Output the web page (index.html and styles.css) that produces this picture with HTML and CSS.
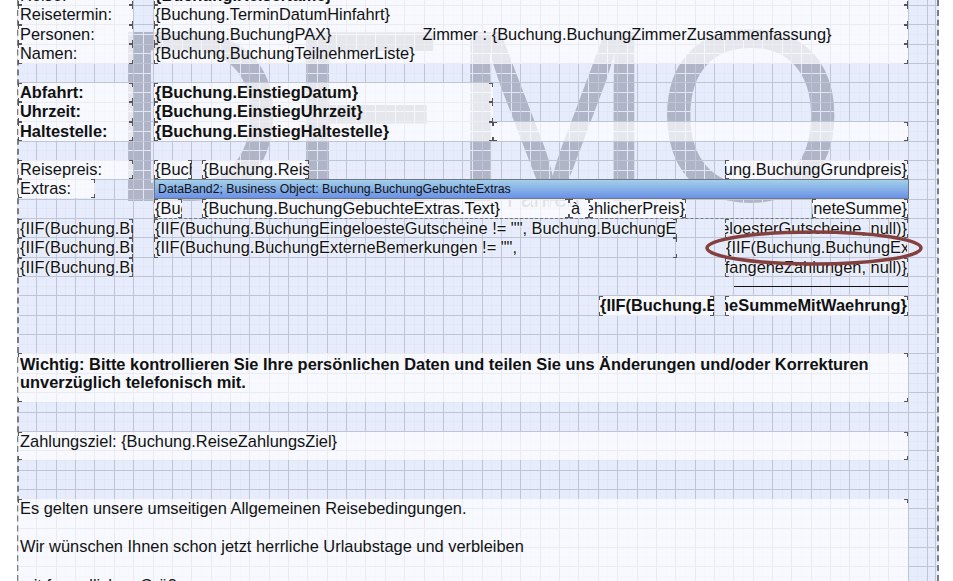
FILE: index.html
```html
<!DOCTYPE html>
<html lang="de">
<head>
  <meta charset="UTF-8">
  <title>Report Designer</title>
  <link rel="stylesheet" href="styles.css">
</head>
<body>
  <div id="desk">
    <div id="page"></div>
    <div id="demo">DEMO</div>
    <div id="demo-small">Fahren</div>
    <div id="grid"></div>

    <div class="obj fill left" id="labels-top">
      <div class="line ticks">Reise:</div>
      <div class="line ticks">Reisetermin:</div>
      <div class="line ticks">Personen:</div>
      <div class="line ticks">Namen:</div>
    </div>
    <div class="obj fill" id="values-top">
      <div class="line ticks bold">{Buchung.ReiseName}</div>
      <div class="line ticks">{Buchung.TerminDatumHinfahrt}</div>
      <div class="line ticks">{Buchung.BuchungPAX}<span id="zimmer">Zimmer : {Buchung.BuchungZimmerZusammenfassung}</span></div>
      <div class="line ticks">{Buchung.BuchungTeilnehmerListe}</div>
    </div>

    <div class="obj fill bold left" id="labels-abfahrt">
      <div class="line ticks">Abfahrt:</div>
      <div class="line ticks">Uhrzeit:</div>
      <div class="line ticks">Haltestelle:</div>
    </div>
    <div class="obj fill bold" id="values-abfahrt">
      <div class="line ticks">{Buchung.EinstiegDatum}</div>
      <div class="line ticks">{Buchung.EinstiegUhrzeit}</div>
      <div class="line ticks">{Buchung.EinstiegHaltestelle}</div>
    </div>
    <div class="obj ticks fill" id="halte-rest"></div>

    <div class="obj ticks fill left" id="reisepreis">Reisepreis:</div>
    <div class="obj ticks fill left" id="extras">Extras:</div>
    <div class="obj ticks fill" id="preis-a">{Buchung.ReisePreis}</div>
    <div class="obj ticks fill" id="preis-b">{Buchung.ReiseGrundpreis}</div>
    <div class="obj ticks fill end" id="preis-c"><span>{Buchung.BuchungGrundpreis}</span></div>

    <div id="extras-row"></div>
    <div class="obj ticks fill" id="extra-a">{Buchung.Anzahl}</div>
    <div class="obj ticks fill" id="extra-b">{Buchung.BuchungGebuchteExtras.Text}</div>
    <div class="obj ticks fill" id="extra-c">à</div>
    <div class="obj ticks fill end" id="extra-d"><span>{Buchung.ZaehlicherPreis}</span></div>
    <div class="obj ticks fill end" id="extra-e"><span>{Buchung.BerechneteSumme}</span></div>

    <div id="band">DataBand2; Business Object: Buchung.BuchungGebuchteExtras</div>

    <div class="obj halo left" id="iif-left">
      <div class="line ticks">{IIF(Buchung.BuchungEingeloeste</div>
      <div class="line ticks">{IIF(Buchung.BuchungExterne</div>
      <div class="line ticks">{IIF(Buchung.BuchungEmpfangene</div>
    </div>
    <div class="obj halo" id="iif-mid">
      <div class="line ticks">{IIF(Buchung.BuchungEingeloesteGutscheine != "", Buchung.BuchungEingeloeste</div>
      <div class="line ticks">{IIF(Buchung.BuchungExterneBemerkungen != "",</div>
    </div>
    <div class="obj ticks halo end" id="iif-right-a"><span>{IIF(Buchung.EingeloesterGutscheine, null)}</span></div>
    <div class="obj halo" id="iif-right-b">{IIF(Buchung.BuchungExterneBemerkungen</div>
    <div class="obj ticks halo end" id="iif-right-c"><span>{IIF(Buchung.EmpfangeneZahlungen, null)}</span></div>

    <div id="sum-line"></div>
    <div class="obj ticks fill bold" id="sum-a">{IIF(Buchung.BuchungEmpfangen</div>
    <div class="obj ticks fill bold end" id="sum-b"><span>{Buchung.OffeneSummeMitWaehrung}</span></div>

    <div class="obj ticks fill bold left" id="wichtig">Wichtig: Bitte kontrollieren Sie Ihre persönlichen Daten und teilen Sie uns Änderungen und/oder Korrekturen<br>unverzüglich telefonisch mit.</div>
    <div class="obj ticks fill left" id="zahlung">Zahlungsziel: {Buchung.ReiseZahlungsZiel}</div>
    <div class="obj ticks fill left" id="schluss">Es gelten unsere umseitigen Allgemeinen Reisebedingungen.<br><br>Wir wünschen Ihnen schon jetzt herrliche Urlaubstage und verbleiben<br><br>mit freundlichen Grüßen</div>

    <svg id="circle" width="953" height="581" viewBox="0 0 953 581">
      <ellipse cx="814" cy="248" rx="107" ry="16" fill="none" stroke="#84403f" stroke-width="3.5"/>
    </svg>
  </div>
</body>
</html>
```

FILE: styles.css
```css
html, body {
  margin: 0;
  background: #fff;
}
#desk {
  position: relative;
  width: 953px;
  height: 581px;
  overflow: hidden;
  font-family: "Liberation Sans", Arial, sans-serif;
  font-size: 16.4px;
  color: #111;
}
#page {
  width: 918px;
  height: 581px;
  margin-left: 17px;
  border-left: 2px dashed #7d7d7d;
  border-right: 2px dashed #7d7d7d;
  background-color: #e6ecfb;
}
#demo {
  position: absolute;
  left: 108px;
  top: -24px;
  font-size: 245px;
  line-height: 280px;
  letter-spacing: 1px;
  color: #afb5c6;
  white-space: nowrap;
}
#demo-small {
  position: absolute;
  left: 507px;
  top: 186px;
  font-size: 23px;
  line-height: 26px;
  color: #9fa1a9;
}
#grid {
  position: absolute;
  left: 19px;
  top: 0;
  width: 918px;
  height: 581px;
  background-image:
    repeating-linear-gradient(90deg, #bfc5d5 0, #bfc5d5 1px, transparent 1px, transparent 19.36px),
    repeating-linear-gradient(180deg, #bfc5d5 0, #bfc5d5 1px, transparent 1px, transparent 19.36px),
    repeating-linear-gradient(90deg, #e1e7f7 0, #e1e7f7 1px, transparent 1px, transparent 9.68px),
    repeating-linear-gradient(180deg, #e1e7f7 0, #e1e7f7 1px, transparent 1px, transparent 9.68px);
  background-position: -2px 5px, 0 5px, -2px 5px, 0 5px;
}

/* report objects, placed on the page like in the designer */
.obj {
  position: absolute;
  box-sizing: border-box;
  padding-left: 1px;
  overflow: hidden;
  white-space: nowrap;
  line-height: 19.4px;
}
.left {
  padding-left: 2px;
}
.line {
  height: 19.4px;
  margin-left: -1px;
  padding-left: 1px;
  overflow: hidden;
}
.left .line {
  margin-left: -2px;
  padding-left: 2px;
}
.ticks {
  background-image:
    linear-gradient(#555, #555), linear-gradient(#555, #555),
    linear-gradient(#555, #555), linear-gradient(#555, #555),
    linear-gradient(#555, #555), linear-gradient(#555, #555),
    linear-gradient(#555, #555), linear-gradient(#555, #555);
  background-repeat: no-repeat;
  background-size: 4px 1px, 1px 4px, 4px 1px, 1px 4px, 4px 1px, 1px 4px, 4px 1px, 1px 4px;
  background-position: 0 0, 0 0, 100% 0, 100% 0, 0 100%, 0 100%, 100% 100%, 100% 100%;
}
.fill {
  background-color: rgba(255, 255, 255, .68);
}
.bold {
  font-weight: bold;
}
.end {
  display: flex;
  justify-content: flex-end;
  padding: 0 1px 0 0;
}
.end span {
  flex: none;
}
.halo {
  text-shadow: 0 0 2px #fff, 0 0 2px #fff;
}

#labels-top { left: 18px; top: -14px; width: 115px; height: 78px; }
#values-top { left: 154px; top: -14px; width: 754px; height: 78px; }
#zimmer { margin-left: 91px; }
#labels-abfahrt { left: 18px; top: 83px; width: 115px; height: 58px; }
#values-abfahrt { left: 154px; top: 83px; width: 339px; height: 58px; }
#halte-rest { left: 493px; top: 122px; width: 415px; height: 19px; }

#reisepreis { left: 18px; top: 160px; width: 115px; height: 19px; }
#extras { left: 18px; top: 179px; width: 77px; height: 19px; }
#preis-a { left: 154px; top: 160px; width: 38px; height: 19px; }
#preis-b { left: 202px; top: 160px; width: 107px; height: 19px; }
#preis-c { left: 725px; top: 160px; width: 183px; height: 19px; }

#band {
  position: absolute;
  left: 154px;
  top: 179px;
  width: 755px;
  height: 20px;
  box-sizing: border-box;
  padding-left: 3px;
  border: 1px solid #6f7684;
  background: linear-gradient(#a3cfe9, #6b92e6);
  font-size: 12.3px;
  line-height: 18px;
  white-space: nowrap;
}
#extras-row {
  position: absolute;
  left: 154px;
  top: 199px;
  width: 755px;
  height: 20px;
  box-sizing: border-box;
  border-bottom: 1px dashed #777;
}
#extra-a { left: 154px; top: 199px; width: 28px; height: 19px; }
#extra-b { left: 202px; top: 199px; width: 367px; height: 19px; }
#extra-c { left: 569px; top: 199px; width: 20px; height: 19px; padding-left: 2px; }
#extra-d { left: 589px; top: 199px; width: 97px; height: 19px; }
#extra-e { left: 812px; top: 199px; width: 96px; height: 19px; }

#iif-left { left: 18px; top: 219px; width: 115px; height: 58px; }
#iif-mid { left: 154px; top: 219px; width: 523px; height: 39px; }
#iif-right-a { left: 725px; top: 219px; width: 183px; height: 19px; }
#iif-right-b { left: 725px; top: 238px; width: 182px; height: 19px; }
#iif-right-c { left: 725px; top: 258px; width: 183px; height: 19px; }

#sum-line {
  position: absolute;
  left: 734px;
  top: 286px;
  width: 174px;
  height: 1px;
  background: #111;
}
#sum-a { left: 599px; top: 296px; width: 115px; height: 20px; }
#sum-b { left: 725px; top: 296px; width: 183px; height: 20px; }

#wichtig { left: 18px; top: 353px; width: 890px; height: 49px; line-height: 18px; padding-top: 2px; }
#zahlung { left: 18px; top: 432px; width: 890px; height: 28px; }
#schluss { left: 18px; top: 499px; width: 890px; height: 90px; line-height: 19.2px; }

#circle {
  position: absolute;
  left: 0;
  top: 0;
  pointer-events: none;
}
```
